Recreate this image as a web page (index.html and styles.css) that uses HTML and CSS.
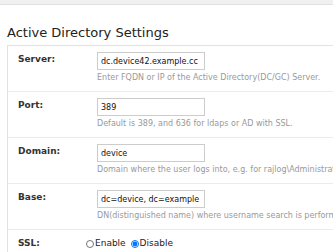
FILE: index.html
```
<!DOCTYPE html>
<html lang="en">
<head>
    <meta charset="UTF-8">
    <title>Active Directory Settings</title>
    <link rel="stylesheet" href="styles.css">
</head>
<body>
    <div class="topbar"></div>

    <div class="page">
        <h2>Active Directory Settings</h2>

        <div class="settings">
            <div class="row">
                <label class="label">Server:</label>
                <div class="field">
                    <input type="text" value="dc.device42.example.cc">
                    <div class="hint">Enter FQDN or IP of the Active Directory(DC/GC) Server.</div>
                </div>
            </div>
            <div class="row">
                <label class="label">Port:</label>
                <div class="field">
                    <input type="text" value="389">
                    <div class="hint">Default is 389, and 636 for ldaps or AD with SSL.</div>
                </div>
            </div>
            <div class="row">
                <label class="label">Domain:</label>
                <div class="field">
                    <input type="text" value="device">
                    <div class="hint">Domain where the user logs into, e.g. for rajlog\Administrator</div>
                </div>
            </div>
            <div class="row">
                <label class="label">Base:</label>
                <div class="field">
                    <input type="text" value="dc=device, dc=example">
                    <div class="hint">DN(distinguished name) where username search is performed</div>
                </div>
            </div>
            <div class="row">
                <label class="label">SSL:</label>
                <div class="field radios">
                    <label><input type="radio" name="ssl">Enable</label>
                    <label><input type="radio" name="ssl" checked>Disable</label>
                </div>
            </div>
        </div>
    </div>
</body>
</html>
```

FILE: styles.css
```
body {
    margin: 0;
    font-family: "DejaVu Sans", Verdana, sans-serif;
    background: #fff;
    color: #222;
    overflow: hidden;
}
.topbar {
    height: 4px;
    background: #f0f0f0;
    border-bottom: 1px solid #e0e0e0;
}
.page {
    padding: 0 0 0 7px;
}
h2 {
    font-size: 13px;
    line-height: 15px;
    font-weight: normal;
    margin: 20px 0 5px 0;
    color: #222;
}
.settings {
    border: 1px solid #e2e2e2;
    border-right: none;
    width: 400px;
}
.row {
    display: flex;
    border-bottom: 1px solid #ececec;
    padding: 6px 0 8px 0;
}
.row:last-child {
    border-bottom: none;
}
.label {
    width: 79px;
    padding: 2px 0 0 10px;
    font-weight: bold;
    font-size: 9px;
    line-height: 11px;
    color: #333;
}
.field input[type=text] {
    display: block;
    box-sizing: border-box;
    width: 108px;
    height: 18px;
    padding: 0 2px 0 3px;
    margin: 0;
    border: 1px solid #ccc;
    font-family: "DejaVu Sans", Verdana, sans-serif;
    font-size: 8px;
    color: #111;
}
.hint {
    font-size: 8px;
    line-height: 10px;
    color: #999;
    margin-top: 3px;
    white-space: nowrap;
}
.radios {
    font-size: 9px;
    line-height: 11px;
    padding-top: 2px;
    margin-left: -11px;
}
.radios label {
    display: inline-flex;
    align-items: center;
    margin-right: 2px;
}
.radios input {
    width: 8px;
    height: 8px;
    margin: 0 1px 0 0;
}
```
